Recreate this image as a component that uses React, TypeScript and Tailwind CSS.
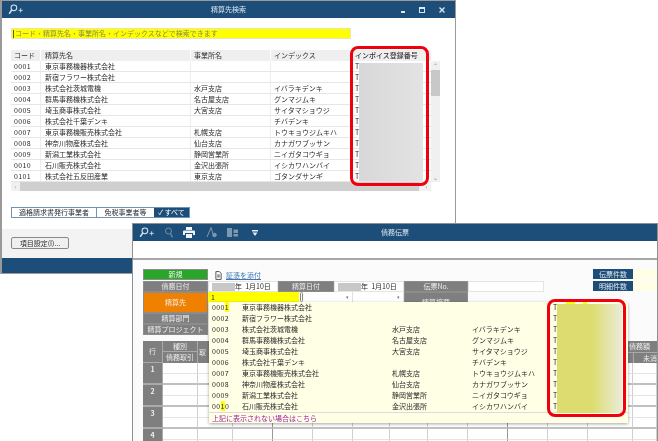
const rows = [
  ["0001", "東京事務機器株式会社", "", ""],
  ["0002", "新宿フラワー株式会社", "", ""],
  ["0003", "株式会社茨城電機", "水戸支店", "イバラキデンキ"],
  ["0004", "群馬事務機株式会社", "名古屋支店", "グンマジムキ"],
  ["0005", "埼玉商事株式会社", "大宮支店", "サイタマショウジ"],
  ["0006", "株式会社千葉デンキ", "", "チバデンキ"],
  ["0007", "東京事務機販売株式会社", "札幌支店", "トウキョウジムキハ"],
  ["0008", "神奈川物産株式会社", "仙台支店", "カナガワブッサン"],
  ["0009", "新潟工業株式会社", "静岡営業所", "ニイガタコウギョ"],
  ["0010", "石川販売株式会社", "金沢出張所", "イシカワハンバイ"],
  ["0101", "株式会社五反田産業", "東京支店", "ゴタンダサンギ"],
];

function SearchPlus({ className }: { className?: string }) {
  return (
    <svg viewBox="0 0 18 13" className={className} fill="none" stroke="currentColor">
      <circle cx="6.5" cy="4.5" r="3.4" strokeWidth="1.2" />
      <path d="M4 7 L1 11.5" strokeWidth="1.8" />
      <path d="M12 7.5h5M14.5 5v5" strokeWidth="1" />
    </svg>
  );
}

function TitleBar({ title, children }: { title: string; children: React.ReactNode }) {
  return (
    <div className="relative flex h-[17px] shrink-0 items-center bg-[#1d4e79] pl-[5px] text-white">
      {children}
      <span className="absolute left-0 right-0 text-center text-[7px] text-[#dce6ef]">{title}</span>
    </div>
  );
}

function RedBox({ className }: { className: string }) {
  return <div className={`absolute z-20 rounded-[8px] border-[3px] border-[#f0000f] ${className}`} />;
}

function SearchWindow() {
  return (
    <div className="absolute left-0 top-0 flex h-[274px] w-[456px] flex-col border-b border-l-2 border-r border-t border-[#9a9a9a] bg-white">
      <TitleBar title="精算先検索">
        <SearchPlus className="h-[11px] w-[18px] text-[#dce6ef]" />
        <div className="z-10 ml-auto flex items-center gap-[14px] pr-[10px] text-[#dce6ef]">
          <span className="mt-[4px] h-[2px] w-[4px] bg-current" />
          <span className="h-[6px] w-[6px] border border-t-2 border-current" />
          <svg viewBox="0 0 6 6" className="h-[6px] w-[6px]" stroke="currentColor" strokeWidth="1.4">
            <path d="M0.5 0.5 L5.5 5.5M5.5 0.5 L0.5 5.5" />
          </svg>
        </div>
      </TitleBar>

      <div className="relative flex-1 pl-[9px]">
        <div className="mt-[10px] flex h-[11px] w-[340px] items-center border border-[#e6e6b0] bg-[#ffff00] pl-[1px] text-[7px] text-[#8a8a50]">
          <span className="mr-[1px] h-[8px] w-px bg-[#555]" />
          コード・精算先名・事業所名・インデックスなどで検索できます
        </div>

        <div className="mt-[11px] flex">
          <div className="w-[420px]">
            <div className="flex h-[11px] bg-[#efefef] text-[7px] leading-[11px] text-[#333]">
              <span className="w-[30px] border-r border-white pl-[3px]">コード</span>
              <span className="w-[150px] border-r border-white pl-[4px]">精算先名</span>
              <span className="w-[80px] border-r border-white pl-[3px]">事業所名</span>
              <span className="w-[80px] border-r border-white pl-[3px]">インデックス</span>
              <span className="w-[80px] pl-[4px] font-medium">インボイス登録番号</span>
            </div>
            {rows.map((r) => (
              <div key={r[0]} className="flex h-[11px] border-b border-[#e6e6e6] text-[7px] leading-[10px] text-[#2b2b2b]">
                <span className="w-[30px] border-r border-[#eeeeee] pl-[3px] tracking-[0.4px]">{r[0]}</span>
                <span className="w-[150px] border-r border-[#eeeeee] pl-[4px]">{r[1]}</span>
                <span className="w-[80px] border-r border-[#eeeeee] pl-[3px]">{r[2]}</span>
                <span className="w-[80px] border-r border-[#eeeeee] pl-[3px]">{r[3]}</span>
                <span className="w-[80px] pl-[4px]">T</span>
              </div>
            ))}
            <div className="flex h-[9px] items-center bg-[#f0f0f0]">
              <span className="w-[9px] text-center text-[6px] leading-[9px] text-[#999]">‹</span>
              <span className="h-full w-[399px] bg-[#cfcfcf]" />
              <span className="ml-auto w-[9px] text-center text-[6px] leading-[9px] text-[#999]">›</span>
            </div>
          </div>
          <div className="mt-[11px] flex h-[121px] w-[9px] flex-col bg-[#f0f0f0]">
            <span className="h-[9px] text-center text-[6px] leading-[9px] text-[#888]">⌃</span>
            <span className="h-[26px] bg-[#c8c8c8]" />
            <span className="mt-auto h-[9px] text-center text-[6px] leading-[9px] text-[#888]">⌄</span>
          </div>
        </div>

        <div className="mt-[16px] flex h-[11px] w-[179px] border border-[#6d93b5] text-[7px] leading-[9px] text-[#2b2b2b]">
          <span className="w-[85px] border-r border-[#6d93b5] text-center">適格請求書発行事業者</span>
          <span className="w-[57px] text-center">免税事業者等</span>
          <span className="flex-1 bg-[#1d4e79] text-center text-white">✓ すべて</span>
        </div>

        <div className="absolute bottom-[15px] left-0 right-0 h-[29px] bg-[#f3f3f3] pl-[9px] pt-[8px]">
          <div className="flex h-[12px] w-[58px] items-center justify-center rounded-[2px] border border-[#8a8a8a] bg-[#f0f0f0] text-[7px] text-[#2b2b2b]">
            項目設定(I)...
          </div>
        </div>
        <div className="absolute bottom-0 left-0 right-0 h-[15px] bg-[#1d4e79]" />
      </div>

      <div className="pointer-events-none absolute left-[357px] top-[62px] z-10 h-[118px] w-[64px] bg-linear-to-r from-[#d8d8d8] to-[#e3e3e3]" />
      <RedBox className="left-[348px] top-[45px] h-[140px] w-[79px]" />
    </div>
  );
}

function Label({ className, children }: { className: string; children: React.ReactNode }) {
  return (
    <div className={`flex items-center justify-center border border-[#8c8c8c] text-[7px] text-[#eeeeee] ${className}`}>
      {children}
    </div>
  );
}

function DateField() {
  return (
    <div className="flex h-[11px] w-[70px] items-center border border-[#e4e4e4] bg-white pl-[3px] text-[7px] text-[#2b2b2b]">
      <span className="h-[8px] w-[23px] bg-[#c8c8c8]" />
      <span>年&nbsp;&nbsp;1月10日</span>
    </div>
  );
}

function Select({ className }: { className: string }) {
  return (
    <div className={`flex h-[11px] items-center justify-end border-b border-r border-[#e0e0e0] bg-white pr-[3px] text-[5px] text-[#777] ${className}`}>
      ▾
    </div>
  );
}

const gridCols = "grid-cols-[20px_35px_35px_40px_40px_40px_37px_38px_40px_40px_40px_40px_45px_24px]";
const cells = Array.from({ length: 13 }, (_, i) => i);

function SlipTable() {
  return (
    <div className="mt-[6px] w-[514px]">
      <div className={`grid h-[22px] ${gridCols} grid-rows-[11px_11px]`}>
        <div className="row-span-2 flex items-center justify-center border-b border-r border-[#aaa] bg-[#7f7f7f] text-[7px] text-[#eee]">行</div>
        <div className="flex items-center justify-center border-b border-r border-[#aaa] bg-[#7f7f7f] text-[7px] text-[#eee]">種別</div>
        <div className="row-span-2 border-r border-[#aaa] bg-[#7f7f7f] pl-[1px] pt-[6px] text-[7px] text-[#eee]">取</div>
        {cells.slice(2).map((i) => (
          <div key={i} className={`flex items-center justify-end whitespace-nowrap bg-[#7f7f7f] text-[7px] text-[#eee] ${i === 12 ? "pr-[7px]" : ""}`}>
            {i === 12 ? "債務額" : ""}
          </div>
        ))}
        <div className="flex items-center justify-center border-r border-[#aaa] bg-[#7f7f7f] text-[7px] text-[#eee]">債務取引</div>
        {cells.slice(2).map((i) => (
          <div key={i} className="flex items-center justify-end border-l border-t border-[#aaa] bg-[#7f7f7f] text-[7px] text-[#eee]">
            {i === 12 ? "未消" : ""}
          </div>
        ))}
      </div>
      {[1, 2, 3, 4].map((n) => (
        <div key={n} className={`grid h-[22px] ${gridCols} grid-rows-[11px_11px]`}>
          <div className="row-span-2 border-b-2 border-r border-[#aaa] bg-[#7f7f7f] pt-[1px] text-center text-[7px] font-bold text-[#eee]">{n}</div>
          {[0, 1].map((r) =>
            cells.map((i) => (
              <div
                key={`${r}-${i}`}
                className={`border-r border-[#d0d0d0] bg-white ${r === 1 ? "border-b-2 border-b-[#c0c0c0]" : "border-b border-b-[#e4e4e4]"} ${i === 2 || i === 8 ? "border-r-[#999]" : ""}`}
              />
            )),
          )}
        </div>
      ))}
    </div>
  );
}

function Dropdown() {
  return (
    <div className="absolute left-[76px] top-[42px] z-10 h-[121px] w-[419px] bg-[#ffffe6] text-[7px] text-[#2b2b2b] shadow-[0_1px_3px_rgba(0,0,0,0.35)]">
      {rows.slice(0, 10).map((r) => (
        <div key={r[0]} className="flex h-[11px] pl-[3px] leading-[11px]">
          <span className="w-[30px] tracking-[0.4px]">
            {r[0] === "0001" ? (
              <>
                000<span className="bg-[#ffff00]">1</span>
              </>
            ) : r[0] === "0010" ? (
              <>
                00<span className="bg-[#ffff00]">1</span>0
              </>
            ) : (
              r[0]
            )}
          </span>
          <span className="w-[150px]">{r[1]}</span>
          <span className="w-[80px]">{r[2]}</span>
          <span className="w-[81px]">{r[3]}</span>
          <span>T</span>
        </div>
      ))}
      <div className="h-[11px] border-t border-[#dcdcdc] pl-[3px] leading-[10px] text-[#a020a0]">
        上記に表示されない場合はこちら
      </div>
    </div>
  );
}

function SlipWindow() {
  return (
    <div className="absolute left-[132px] top-[223px] flex h-[218px] w-[526px] flex-col overflow-hidden border-x border-t border-[#8f8f8f] bg-white">
      <TitleBar title="債務伝票">
        <div className="z-10 flex items-center gap-[9px]">
          <SearchPlus className="h-[11px] w-[18px] text-[#dce6ef]" />
          <svg viewBox="0 0 8 11" className="h-[11px] w-[8px] text-[#6f8ba5]" fill="none" stroke="currentColor">
            <circle cx="3.5" cy="4" r="3" />
            <path d="M5.5 6.5 L7.5 10.5" strokeWidth="1.4" />
          </svg>
          <svg viewBox="0 0 12 11" className="ml-[1px] h-[11px] w-[12px] text-[#eef3f7]" fill="currentColor">
            <path d="M3 0h6v3H3zM1 3.5h10a1 1 0 0 1 1 1V8h-2V6H2v2H0V4.5a1 1 0 0 1 1-1zM3 7h6v4H3z" />
          </svg>
          <svg viewBox="0 0 12 11" className="ml-[1px] h-[11px] w-[12px] text-[#7f98ae]" fill="none" stroke="currentColor">
            <path d="M6 0.5 L2 10M6 0.5 L8 7" />
            <circle cx="9.5" cy="8" r="1.8" fill="currentColor" />
          </svg>
          <svg viewBox="0 0 12 11" className="ml-[1px] h-[11px] w-[12px] text-[#7f98ae]" fill="currentColor">
            <path d="M0 1h5v9H0zM6.5 2.5H11V6H6.5zM6.5 7H11v2.5H6.5z" />
          </svg>
          <svg viewBox="0 0 6 6" className="ml-[4px] h-[6px] w-[6px] text-[#e4ebf1]" fill="currentColor">
            <path d="M0 0h6v1.5H0zM0.5 2.5h5L3 6z" />
          </svg>
        </div>
      </TitleBar>
      <div className="h-[17px] shrink-0 bg-white" />
      <div className="relative flex-1 border-t-2 border-[#a8a8a8] bg-[#fbfbfb] pl-[10px] pt-[9px]">
        <div className="flex h-[12px]">
          <div className="flex h-[11px] w-[65px] items-center justify-center border border-[#8c8c8c] bg-[#2aa52a] text-[7px] text-[#e8f5e8]">新規</div>
          <div className="ml-[7px] flex items-center gap-[4px]">
            <svg viewBox="0 0 8 10" className="h-[9px] w-[7px] text-[#444]" fill="none" stroke="currentColor">
              <path d="M1 0.5h4l2 2v7H1zM2.5 4.5h3M2.5 6.5h3" />
            </svg>
            <span className="text-[7px] text-[#3d78b5] underline">証憑を添付</span>
          </div>
          <div className="ml-auto flex h-[10px] w-[64px] items-center">
            <div className="flex h-full w-[40px] items-center justify-center bg-[#1d4e79] text-[7px] text-[#dce6ef]">伝票件数</div>
            <div className="h-full flex-1 bg-[#ffffe6]" />
          </div>
        </div>
        <div className="flex h-[11px]">
          <Label className="h-[11px] w-[65px] bg-[#7f7f7f]">債務日付</Label>
          <DateField />
          <Label className="h-[11px] w-[56px] bg-[#7f7f7f]">精算日付</Label>
          <DateField />
          <Label className="h-[11px] w-[64px] bg-[#7f7f7f]">伝票No.</Label>
          <div className="h-[11px] w-[76px] border border-[#e4e4e4] bg-white" />
          <div className="ml-auto flex h-[10px] w-[64px] items-center">
            <div className="flex h-full w-[40px] items-center justify-center bg-[#1d4e79] text-[7px] text-[#dce6ef]">明細件数</div>
            <div className="h-full flex-1 bg-[#ffffe6]" />
          </div>
        </div>
        <div className="flex h-[21px]">
          <Label className="h-[21px] w-[65px] bg-[#f08000]">精算先</Label>
          <div className="flex h-[11px] w-[91px] items-center bg-[#ffff00] pl-[3px] text-[7px] text-[#2b2b2b]">1</div>
          <span className="mx-[1px] h-[10px] w-[3px] rounded-sm border border-[#888] bg-white" />
          <Select className="w-[49px]" />
          <Select className="w-[51px]" />
          <Label className="h-[21px] w-[64px] bg-[#7f7f7f]">精算摘要</Label>
        </div>
        <Label className="h-[11px] w-[65px] bg-[#7f7f7f]">精算部門</Label>
        <Label className="h-[11px] w-[65px] bg-[#7f7f7f]">精算プロジェクト</Label>
        <SlipTable />
        <Dropdown />
        <div className="absolute left-[433px] top-[42px] z-20 h-[2px] w-[9px] bg-[#ffff00]" />
        <div className="absolute left-[450px] top-[42px] z-20 h-[2px] w-[4px] bg-[#ffff00]" />
        <div className="absolute left-[424px] top-[44px] z-20 h-[109px] w-[65px] bg-linear-to-r from-[#dcdc70] via-[#dcdc70] via-55% to-[#ebebd8]" />
        <RedBox className="left-[414px] top-[39px] h-[118px] w-[79px]" />
      </div>
    </div>
  );
}

export default function App() {
  return (
    <div className="relative h-[441px] w-[658px] overflow-hidden bg-white font-['Noto_Sans_CJK_JP','Liberation_Sans',sans-serif] blur-[0.3px]">
      <SearchWindow />
      <SlipWindow />
    </div>
  );
}
